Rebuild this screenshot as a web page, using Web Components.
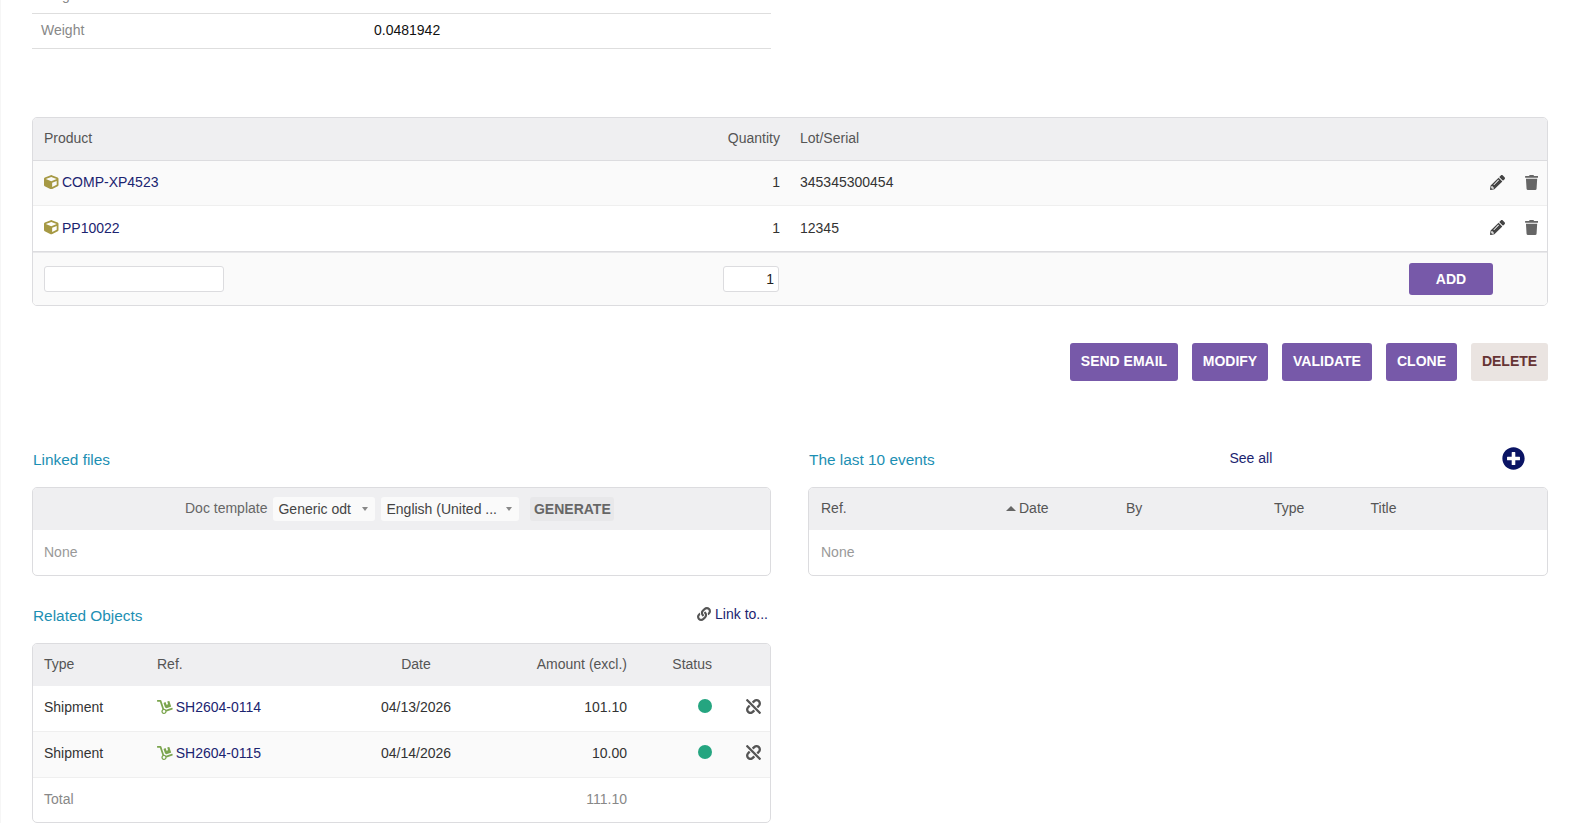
<!DOCTYPE html>
<html lang="en">
<head>
<meta charset="utf-8">
<title>Shipment</title>
<style>
  html, body { margin: 0; height: 100%; overflow: hidden; background: #fff; }
  body { font: 14px "Liberation Sans", Arial, sans-serif; color: #333; }
</style>
</head>
<body>
<shipment-page></shipment-page>

<script>
const ICONS = {
    cube: ['0 0 512 512', 'M239.1 6.3l-208 78c-18.7 7-31.1 25-31.1 45v225.1c0 18.2 10.3 34.8 26.5 42.9l208 104c13.5 6.8 29.4 6.8 42.9 0l208-104c16.3-8.1 26.5-24.8 26.5-42.9V129.3c0-20-12.4-37.9-31.1-44.9l-208-78C262 2.2 250 2.2 239.1 6.3zM256 68.4l192 72v1.1l-192 78-192-78v-1.1l192-72zm32 356V275.5l160-65v133.9l-160 80z'],
    pencil: ['0 0 512 512', 'M497.9 142.1l-46.1 46.1c-4.7 4.7-12.3 4.7-17 0l-111-111c-4.7-4.7-4.7-12.3 0-17l46.1-46.1c18.7-18.7 49.1-18.7 67.9 0l60.1 60.1c18.8 18.7 18.8 49.1 0 67.9zM284.2 99.8L21.6 362.4.4 483.9c-2.9 16.4 11.4 30.6 27.8 27.8l121.5-21.3 262.6-262.6c4.7-4.7 4.7-12.3 0-17l-111-111c-4.8-4.7-12.4-4.7-17.1 0zM124.1 339.9c-5.5-5.5-5.5-14.3 0-19.8l154-154c5.5-5.5 14.3-5.5 19.8 0s5.5 14.3 0 19.8l-154 154c-5.5 5.5-14.3 5.5-19.8 0zM88 424h48v36.3l-64.5 11.3-31.1-31.1L51.7 376H88v48z'],
    trash: ['0 0 448 512', 'M432 32H312l-9.4-18.7A24 24 0 0 0 281.1 0H166.8a23.72 23.72 0 0 0-21.4 13.3L136 32H16A16 16 0 0 0 0 48v32a16 16 0 0 0 16 16h416a16 16 0 0 0 16-16V48a16 16 0 0 0-16-16zM53.2 467a48 48 0 0 0 47.9 45h245.8a48 48 0 0 0 47.9-45L416 128H32z'],
    plus: ['0 0 512 512', 'M256 8C119 8 8 119 8 256s111 248 248 248 248-111 248-248S393 8 256 8zm144 276c0 6.6-5.4 12-12 12h-92v92c0 6.6-5.4 12-12 12h-56c-6.6 0-12-5.4-12-12v-92h-92c-6.6 0-12-5.4-12-12v-56c0-6.6 5.4-12 12-12h92v-92c0-6.6 5.4-12 12-12h56c6.6 0 12 5.4 12 12v92h92c6.6 0 12 5.4 12 12v56z'],
    link: ['0 0 512 512', 'M326.612 185.391c59.747 59.809 58.927 155.698.36 214.59-.11.12-.24.25-.36.37l-67.2 67.2c-59.27 59.27-155.699 59.262-214.96 0-59.27-59.26-59.27-155.7 0-214.96l37.106-37.106c9.84-9.84 26.786-3.3 27.294 10.606.648 17.722 3.826 35.527 9.69 52.721 1.986 5.822.567 12.262-3.783 16.612l-13.087 13.087c-28.026 28.026-28.905 73.66-1.155 101.96 28.024 28.579 74.086 28.749 102.325.51l67.2-67.19c28.191-28.191 28.073-73.757 0-101.83-3.701-3.694-7.429-6.564-10.341-8.569a16.037 16.037 0 0 1-6.947-12.606c-.396-10.567 3.348-21.456 11.698-29.806l21.054-21.055c5.521-5.521 14.182-6.199 20.584-1.731a152.482 152.482 0 0 1 20.522 17.197zM467.547 44.449c-59.261-59.262-155.69-59.27-214.96 0l-67.2 67.2c-.12.12-.25.25-.36.37-58.566 58.892-59.387 154.781.36 214.59a152.454 152.454 0 0 0 20.521 17.196c6.402 4.468 15.064 3.789 20.584-1.731l21.054-21.055c8.35-8.35 12.094-19.239 11.698-29.806a16.037 16.037 0 0 0-6.947-12.606c-2.912-2.005-6.64-4.875-10.341-8.569-28.073-28.073-28.191-73.639 0-101.83l67.2-67.19c28.239-28.239 74.3-28.069 102.325.51 27.75 28.3 26.872 73.934-1.155 101.96l-13.087 13.087c-4.35 4.35-5.769 10.79-3.783 16.612 5.864 17.194 9.042 34.999 9.69 52.721.509 13.906 17.454 20.446 27.294 10.606l37.106-37.106c59.271-59.259 59.271-155.699.001-214.959z'],
    unlink: ['0 0 512 512', 'M304.083 405.907c4.686 4.686 4.686 12.284 0 16.971l-44.674 44.674c-59.263 59.262-155.693 59.266-214.961 0-59.264-59.265-59.264-155.696 0-214.96l44.675-44.675c4.686-4.686 12.284-4.686 16.971 0l39.598 39.598c4.686 4.686 4.686 12.284 0 16.971l-44.675 44.674c-28.072 28.073-28.072 73.75 0 101.823 28.072 28.072 73.75 28.073 101.824 0l44.674-44.674c4.686-4.686 12.284-4.686 16.971 0l39.597 39.598zm-56.568-260.216c4.686 4.686 12.284 4.686 16.971 0l44.674-44.674c28.072-28.075 73.75-28.073 101.824 0 28.072 28.073 28.072 73.75 0 101.823l-44.675 44.674c-4.686 4.686-4.686 12.284 0 16.971l39.598 39.598c4.686 4.686 12.284 4.686 16.971 0l44.675-44.675c59.265-59.265 59.265-155.695 0-214.96-59.266-59.264-155.695-59.264-214.961 0l-44.674 44.674c-4.686 4.686-4.686 12.284 0 16.971l39.597 39.598zm234.828 359.28l22.627-22.627c9.373-9.373 9.373-24.569 0-33.941L63.598 7.029c-9.373-9.373-24.569-9.373-33.941 0L7.029 29.657c-9.373 9.373-9.373 24.569 0 33.941l441.373 441.373c9.373 9.372 24.569 9.372 33.941 0z'],
    dolly: ['0 0 576 512', 'M294.2 277.7c18 5 34.7 13.4 49.5 24.7l161.5-53.8c8.4-2.8 12.9-11.9 10.1-20.2L454.9 47.2c-2.8-8.4-11.9-12.9-20.2-10.1l-61.1 20.4 33.1 99.4L346 177l-33.1-99.4-61.6 20.5c-8.4 2.8-12.9 11.9-10.1 20.2l53 159.4zm281 48.7L565 296c-2.8-8.4-11.9-12.9-20.2-10.1l-213.5 71.2c-17.2-22-43.6-36.4-73.5-37L158.4 21.9C154 8.8 141.8 0 128 0H16C7.2 0 0 7.2 0 16v32c0 8.8 7.2 16 16 16h88.9l92.2 276.7c-26.1 20.4-41.7 53.6-36 90.5 6.1 39.4 37.9 72.3 77.3 79.2 60.2 10.7 112.3-34.8 113.4-92.6l213.3-71.2c8.3-2.8 12.8-11.9 10.1-20.2zM256 464c-26.5 0-48-21.5-48-48s21.5-48 48-48 48 21.5 48 48-21.5 48-48 48z']
};

class UiIcon extends HTMLElement {
    connectedCallback() {
        const [box, d] = ICONS[this.getAttribute('name')];
        this.attachShadow({ mode: 'open' }).innerHTML = `
            <style>
                :host { display: inline-flex; flex: none; color: inherit; }
                svg { display: block; height: var(--size, 14px); width: auto; fill: currentColor; }
            </style>
            <svg viewBox="${box}" aria-hidden="true"><path d="${d}"/></svg>`;
    }
}
customElements.define('ui-icon', UiIcon);

class UiButton extends HTMLElement {
    connectedCallback() {
        this.attachShadow({ mode: 'open' }).innerHTML = `
            <style>
                :host {
                    display: inline-flex;
                    align-items: center;
                    justify-content: center;
                    box-sizing: border-box;
                    height: 38px;
                    padding-bottom: 2px;
                    border-radius: 3px;
                    background: #7759a9;
                    color: #fff;
                    font-weight: 700;
                    font-size: 14px;
                    white-space: nowrap;
                }
                :host([kind="delete"]) { background: #eae4e1; color: #633; }
                :host([kind="small"]) { height: 32px; width: 84px; padding-bottom: 1px; }
                :host([kind="soft"]) {
                    height: 24px;
                    padding: 0 3.5px 1px;
                    background: #e8e8ea;
                    color: #666;
                }
            </style>
            <slot></slot>`;
    }
}
customElements.define('ui-button', UiButton);

// bordered rounded box used by every list table
class ListBox extends HTMLElement {
    connectedCallback() {
        this.attachShadow({ mode: 'open' }).innerHTML = `
            <style>
                :host {
                    display: block;
                    border: 1px solid #dcdcdf;
                    border-radius: 5px;
                    overflow: hidden;
                    background: #fff;
                }
            </style>
            <slot></slot>`;
    }
}
customElements.define('list-box', ListBox);

class SectionTitle extends HTMLElement {
    connectedCallback() {
        this.attachShadow({ mode: 'open' }).innerHTML = `
            <style>
                :host {
                    display: flex;
                    align-items: center;
                    height: 24px;
                    margin-bottom: 16px;
                    padding-left: 1px;
                    color: #1c8fb3;
                    font-size: 15.4px;
                }
                .name { flex: 1; padding-top: 2px; }
                .extra { color: #131c6b; font-size: 14px; display: flex; margin-bottom: 3px; }
            </style>
            <div class="name"><slot></slot></div>
            <div class="extra"><slot name="extra"></slot></div>`;
    }
}
customElements.define('section-title', SectionTitle);

const ROW_CSS = `
    :host { display: block; }
    * { box-sizing: border-box; }
    a { color: #1b2470; text-decoration: none; }
    .row { display: grid; align-items: center; padding: 0 0 2px 11px; }
    .head { background: #efeff1; color: #555; }
    .right { text-align: right; }
    .center { text-align: center; }
    .ref { display: flex; align-items: center; gap: 3.5px; }
    .none { height: 45px; padding: 0 0 2px 11px; display: flex; align-items: center; color: #999; }
`;

class ExtraFields extends HTMLElement {
    connectedCallback() {
        const rows = [['Height', ''], ['Weight', '0.0481942']];
        this.attachShadow({ mode: 'open' }).innerHTML = `
            <style>
                :host { display: block; width: 739px; margin-top: -21px; }
                .field {
                    display: grid;
                    grid-template-columns: 333px 1fr;
                    align-items: center;
                    box-sizing: border-box;
                    height: 35px;
                    padding: 0 0 2px 9px;
                    border-bottom: 1px solid #dedede;
                    color: #888;
                }
                .value { color: #111; }
            </style>
            ${rows.map(r => `<div class="field"><div>${r[0]}</div><div class="value">${r[1]}</div></div>`).join('')}`;
    }
}
customElements.define('extra-fields', ExtraFields);

class ShipmentLines extends HTMLElement {
    connectedCallback() {
        const lines = [
            { ref: 'COMP-XP4523', qty: '1', lot: '345345300454', bg: '#fafafa', h: 45, line: '#efefef' },
            { ref: 'PP10022', qty: '1', lot: '12345', bg: '#fff', h: 46, line: '#dcdcdf' }
        ];
        const lineRow = l => `
            <div class="row line" style="background:${l.bg};height:${l.h}px;border-bottom:1px solid ${l.line}">
                <div class="ref"><ui-icon name="cube" style="color:#a69944;--size:14.5px"></ui-icon><a>${l.ref}</a></div>
                <div class="right">${l.qty}</div>
                <div></div>
                <div>${l.lot}</div>
                <div class="center"><ui-icon name="pencil" style="color:#444;--size:15px"></ui-icon></div>
                <div class="center"><ui-icon name="trash" style="color:#666;--size:15px"></ui-icon></div>
            </div>`;
        this.attachShadow({ mode: 'open' }).innerHTML = `
            <style>
                ${ROW_CSS}
                .row { grid-template-columns: 676px 60px 20px 1fr 37px 31px; }
                .head { height: 43px; border-bottom: 1px solid #dcdcdf; }
                .center { display: flex; justify-content: center; }
                .add { height: 53px; padding-bottom: 0; background: #fafafa; border-top: 1px solid #e8e8ea; }
                input {
                    display: block;
                    height: 26px;
                    border: 1px solid #dcdcdf;
                    border-radius: 3px;
                    background: #fff;
                    font: inherit;
                    color: #222;
                    padding: 0 4px;
                    outline: none;
                }
                .product { width: 180px; }
                .qty { width: 56px; margin-left: 3px; text-align: right; }
                .action { grid-column: 4 / 7; justify-self: end; margin-right: 54px; }
            </style>
            <list-box>
                <div class="row head">
                    <div>Product</div><div class="right">Quantity</div><div></div><div>Lot/Serial</div>
                </div>
                ${lines.map(lineRow).join('')}
                <div class="row add">
                    <input class="product" type="text">
                    <input class="qty" type="text" value="1">
                    <div></div>
                    <ui-button class="action" kind="small">ADD</ui-button>
                </div>
            </list-box>`;
    }
}
customElements.define('shipment-lines', ShipmentLines);

class ActionBar extends HTMLElement {
    connectedCallback() {
        this.attachShadow({ mode: 'open' }).innerHTML = `
            <style>
                :host { display: flex; justify-content: flex-end; gap: 14px; margin: 37px 0 66px; }
            </style>
            <ui-button style="width:108px">SEND EMAIL</ui-button>
            <ui-button style="width:76px">MODIFY</ui-button>
            <ui-button style="width:90px">VALIDATE</ui-button>
            <ui-button style="width:71px">CLONE</ui-button>
            <ui-button style="width:77px" kind="delete">DELETE</ui-button>`;
    }
}
customElements.define('action-bar', ActionBar);

class LinkedFiles extends HTMLElement {
    connectedCallback() {
        this.attachShadow({ mode: 'open' }).innerHTML = `
            <style>
                ${ROW_CSS}
                .bar {
                    display: flex;
                    align-items: center;
                    height: 42px;
                    padding-left: 152px;
                    background: #efeff1;
                    color: #666;
                }
                .label { padding-bottom: 2px; }
                .pick {
                    position: relative;
                    height: 24px;
                    margin-left: 6px;
                    padding: 0 5px;
                    display: flex;
                    align-items: center;
                    border-radius: 3px;
                    background: #fafafa;
                    color: #444;
                }
                .pick::after {
                    content: "";
                    position: absolute;
                    right: 7px;
                    top: 10px;
                    border: 3px solid transparent;
                    border-top: 4px solid #888;
                    border-bottom: 0;
                }
                .one { width: 102px; }
                .two { width: 138px; margin-left: 6px; }
                ui-button { margin-left: 11px; }
            </style>
            <section-title>Linked files</section-title>
            <list-box>
                <div class="bar">
                    <span class="label">Doc template</span>
                    <div class="pick one">Generic odt</div>
                    <div class="pick two">English (United ...</div>
                    <ui-button kind="soft">GENERATE</ui-button>
                </div>
                <div class="none">None</div>
            </list-box>`;
    }
}
customElements.define('linked-files', LinkedFiles);

class EventList extends HTMLElement {
    connectedCallback() {
        this.attachShadow({ mode: 'open' }).innerHTML = `
            <style>
                ${ROW_CSS}
                .extra { display: flex; align-items: center; width: 318.5px; justify-content: space-between; padding: 2px 23.5px 0 0; }
                .extra a { margin-bottom: 1px; }
                .row { grid-template-columns: 185px 120px 148px 96.5px 1fr; height: 42px; padding-left: 12px; }
                .none { padding-left: 12px; }
                .date { display: flex; align-items: center; gap: 3px; }
                .date i { border: 5px solid transparent; border-bottom: 5px solid #666; border-top: 0; }
            </style>
            <section-title>The last 10 events
                <div class="extra" slot="extra">
                    <a>See all</a>
                    <ui-icon name="plus" style="color:#0a1464;--size:23px"></ui-icon>
                </div>
            </section-title>
            <list-box>
                <div class="row head">
                    <div>Ref.</div>
                    <div class="date"><i></i>Date</div>
                    <div>By</div><div>Type</div><div>Title</div>
                </div>
                <div class="none">None</div>
            </list-box>`;
    }
}
customElements.define('event-list', EventList);

class RelatedObjects extends HTMLElement {
    connectedCallback() {
        const rows = [
            { type: 'Shipment', ref: 'SH2604-0114', date: '04/13/2026', amount: '101.10', bg: '#fff' },
            { type: 'Shipment', ref: 'SH2604-0115', date: '04/14/2026', amount: '10.00', bg: '#fafafa' }
        ];
        this.attachShadow({ mode: 'open' }).innerHTML = `
            <style>
                ${ROW_CSS}
                :host { margin-top: 27px; }
                .row { grid-template-columns: 113px 202px 114px 154px 85px 1fr; }
                .head { height: 42px; }
                .item { height: 46px; padding-bottom: 4px; border-bottom: 1px solid #efefef; color: #333; }
                .item .ref { gap: 3px; }
                .total { height: 44px; padding-bottom: 3px; color: #888; }
                .dot { width: 14px; height: 14px; border-radius: 50%; background: #25a580; justify-self: end; margin-bottom: 1px; }
                .off { justify-self: end; margin-right: 9px; color: #555; --size: 15px; }
                .link { display: flex; align-items: center; gap: 4px; padding-right: 3px; }
                .link ui-icon { color: #555; --size: 14px; }
            </style>
            <section-title>Related Objects
                <a class="link" slot="extra"><ui-icon name="link"></ui-icon>Link to...</a>
            </section-title>
            <list-box>
                <div class="row head">
                    <div>Type</div><div>Ref.</div><div class="center">Date</div>
                    <div class="right">Amount (excl.)</div><div class="right">Status</div><div></div>
                </div>
                ${rows.map(r => `
                <div class="row item" style="background:${r.bg}">
                    <div>${r.type}</div>
                    <div class="ref"><ui-icon name="dolly" style="color:#7ba54e"></ui-icon><a>${r.ref}</a></div>
                    <div class="center">${r.date}</div>
                    <div class="right">${r.amount}</div>
                    <div class="dot"></div>
                    <ui-icon class="off" name="unlink"></ui-icon>
                </div>`).join('')}
                <div class="row total">
                    <div>Total</div><div></div><div></div><div class="right">111.10</div><div></div><div></div>
                </div>
            </list-box>`;
    }
}
customElements.define('related-objects', RelatedObjects);

class ShipmentPage extends HTMLElement {
    connectedCallback() {
        this.attachShadow({ mode: 'open' }).innerHTML = `
            <style>
                :host { display: block; padding: 0 25px 0 31px; border-left: 1px solid #f6f6f6; min-height: 100vh; box-sizing: border-box; }
                shipment-lines { margin-top: 68px; }
                .columns { display: grid; grid-template-columns: 739px 740px; column-gap: 37px; align-items: start; }
            </style>
            <extra-fields></extra-fields>
            <shipment-lines></shipment-lines>
            <action-bar></action-bar>
            <div class="columns">
                <div>
                    <linked-files></linked-files>
                    <related-objects></related-objects>
                </div>
                <event-list></event-list>
            </div>`;
    }
}
customElements.define('shipment-page', ShipmentPage);
</script>
</body>
</html>
